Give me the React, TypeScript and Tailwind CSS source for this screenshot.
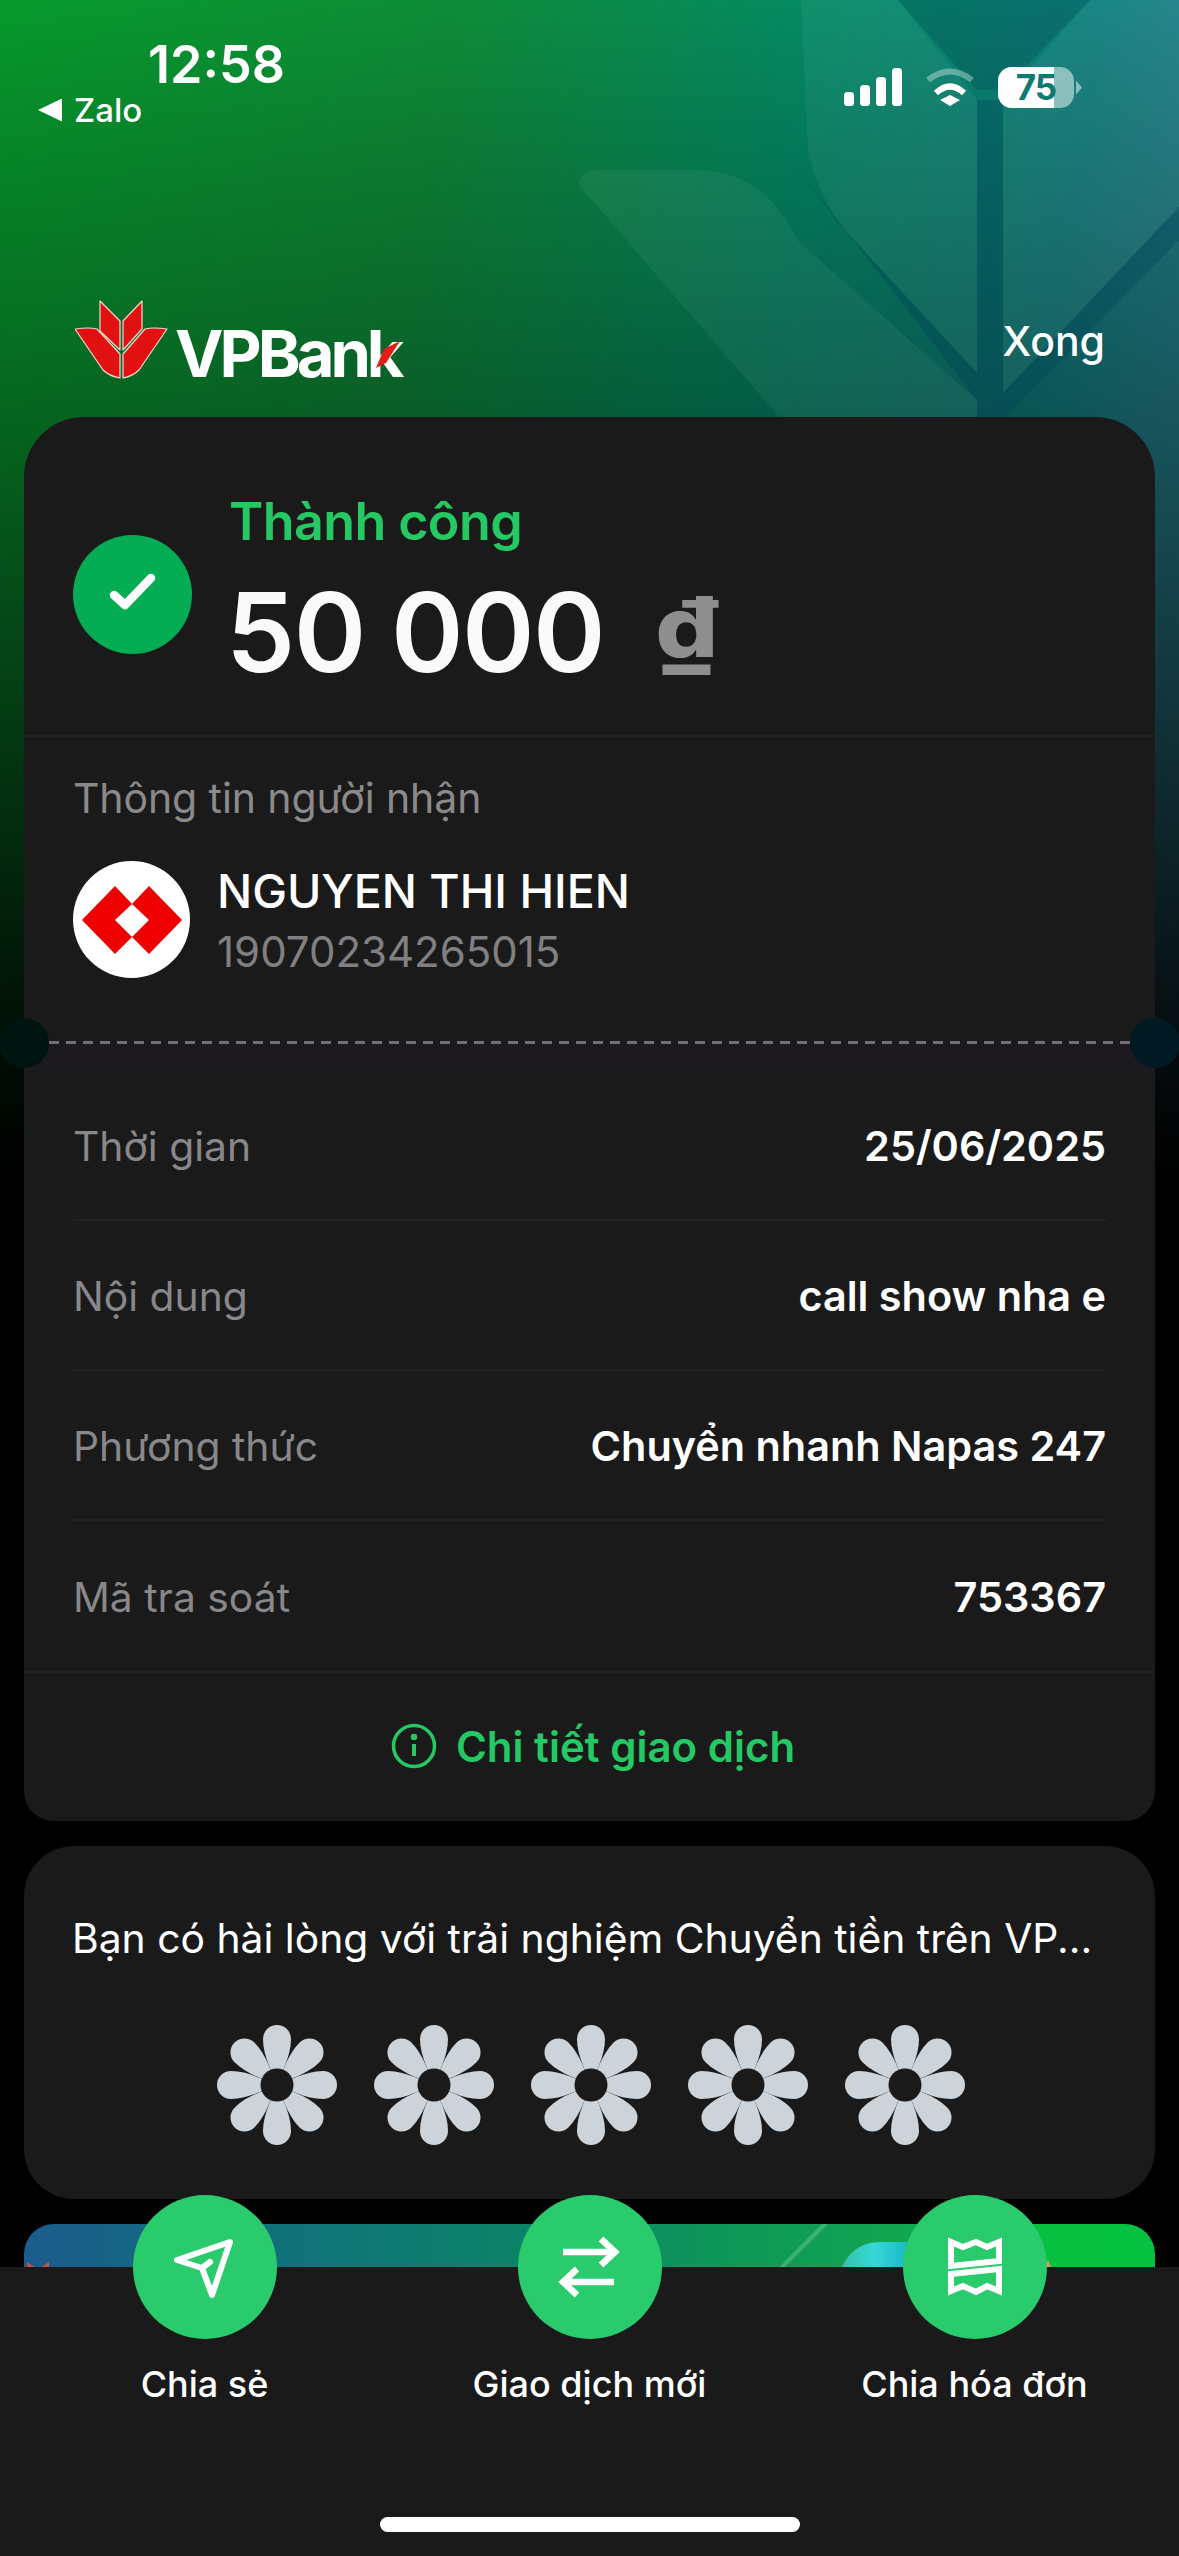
import React from "react";

const rows = [
  { label: "Thời gian", value: "25/06/2025" },
  { label: "Nội dung", value: "call show nha e" },
  { label: "Phương thức", value: "Chuyển nhanh Napas 247" },
  { label: "Mã tra soát", value: "753367" },
];

function Flower() {
  const angles = [0, 45, 90, 135, 180, 225, 270, 315];
  return (
    <svg width="120" height="120" viewBox="0 0 120 120">
      {angles.map((a) => (
        <path
          key={a}
          d="M60 60C56 48 46 32 46 14A14 14 0 0 1 74 14C74 32 64 48 60 60Z"
          fill="#ccd4da"
          transform={`rotate(${a} 60 60)`}
        />
      ))}
      <circle cx="60" cy="60" r="16.5" fill="#1a1a1a" />
    </svg>
  );
}

function SendIcon() {
  return (
    <svg width="144" height="144" viewBox="0 0 144 144" fill="none" stroke="white" strokeWidth="6" strokeLinecap="round" strokeLinejoin="round">
      <path d="M97 47L44 65L69 73L79 100Z" />
      <path d="M69 73L77 67" />
    </svg>
  );
}

function SwapIcon() {
  return (
    <svg width="144" height="144" viewBox="0 0 144 144" fill="none" stroke="white" strokeWidth="6.5">
      <path d="M45 57H97" />
      <path d="M83 44L97 57L83 70" />
      <path d="M96 87H44" />
      <path d="M59 74L45 87L59 100" />
    </svg>
  );
}

function ReceiptIcon() {
  return (
    <svg width="144" height="144" viewBox="0 0 144 144" fill="none" stroke="white" strokeWidth="6">
      <path d="M48 47L60 52L73 47L84 52L96 47V66L48 71Z" />
      <path d="M48 79L96 74V96L84 91L73 97L60 91L48 96Z" />
    </svg>
  );
}

function LogoMark() {
  return (
    <svg width="93" height="79" viewBox="0 0 93 79" fill="#e21111" stroke="#f5d5d0" strokeWidth="1.2" strokeLinejoin="round">
      <path d="M25 1L45 21V50L25 31Z" />
      <path d="M67 1L48 21V50L67 29Z" />
      <path d="M0 29Q14 27 22 29L45 54V78Q34 76 28 70Z" />
      <path d="M92 29Q78 27 70 29L48 54V78Q58 76 64 70Z" />
    </svg>
  );
}

export default function App() {
  const actions = [
    { label: "Chia sẻ", icon: <SendIcon /> },
    { label: "Giao dịch mới", icon: <SwapIcon /> },
    { label: "Chia hóa đơn", icon: <ReceiptIcon /> },
  ];

  return (
    <div className="relative w-[1179px] h-[2556px] overflow-hidden bg-black font-['Inter',sans-serif] text-white">
      {/* hero background */}
      <div className="absolute left-0 top-0 w-full h-[1180px] bg-[linear-gradient(to_bottom,rgba(0,0,0,0)_0%,rgba(0,0,0,0.1)_10%,rgba(0,0,0,0.32)_34%,rgba(0,0,0,0.6)_60%,rgba(0,0,0,0.9)_88%,#000_100%),linear-gradient(100deg,#069a2c_0%,#0e8c38_33%,#048a66_60%,#0f8080_80%,#3a8098_100%)]">
        <svg width="1179" height="430" viewBox="0 0 1179 430" fill="white">
          <path opacity="0.05" d="M579 185Q578 170 600 170H700Q765 172 797 240L977 400V430H790Z" />
          <path opacity="0.05" d="M801 0L808 150Q815 185 840 225L977 373V100L898 0Z" />
          <path opacity="0.05" d="M1090 0L1003 100V393L1179 207V0Z" />
          <path opacity="0.25" d="M898 0H1090L1003 90H977Z" fill="#003c46" />
          <path opacity="0.3" d="M977 100H1003V430H977Z M797 167L840 225L977 373V400Z M1179 207V240L1003 420V393Z" fill="#003c56" />
        </svg>
      </div>

      <div className="relative flex flex-col">
        {/* status bar */}
        <div className="flex justify-between h-[130px]">
          <div className="pl-[38px] pt-[40px]">
            <div className="ml-[110px] h-[50px] leading-[50px] text-[52px] font-semibold">12:58</div>
            <div className="flex items-center h-[40px] gap-[12px]">
              <div className="w-[24px] h-[23px] bg-white [clip-path:polygon(100%_0,100%_100%,0_50%)]" />
              <span className="text-[33px] font-medium leading-[40px]">Zalo</span>
            </div>
          </div>
          <div className="flex items-start gap-[23px] pt-[67px] pr-[97px]">
            <svg width="58" height="39" viewBox="0 0 58 39" fill="white" className="mt-[1px]">
              <rect x="0" y="24" width="10" height="14" rx="3.5" />
              <rect x="16" y="17" width="10" height="21" rx="3.5" />
              <rect x="32" y="9" width="10" height="29" rx="3.5" />
              <rect x="48" y="0" width="10" height="38" rx="3.5" />
            </svg>
            <svg width="50" height="39" viewBox="0 0 50 39" fill="none" className="mt-[1px]">
              <path d="M3 12Q25 -5 47 12" stroke="white" strokeOpacity="0.35" strokeWidth="6" />
              <path d="M11 25Q25 12 39 25" stroke="white" strokeWidth="6" />
              <path d="M15 32L25 27L35 32L25 38Z" fill="white" />
            </svg>
            <div className="flex items-center gap-[2px]">
              <div className="relative w-[76px] h-[41px] rounded-[14px] overflow-hidden bg-white/50">
                <div className="absolute left-0 top-0 bottom-0 w-[56px] bg-white" />
                <div className="absolute inset-0 flex items-center justify-center text-[35px] font-bold text-[#0f7a70] leading-none tracking-[-1px]">75</div>
              </div>
              <div className="w-[6px] h-[14px] bg-white/50 [clip-path:polygon(0_0,100%_50%,0_100%)]" />
            </div>
          </div>
        </div>

        {/* logo row */}
        <div className="flex justify-between items-start mt-[170px] h-[117px] pl-[75px] pr-[74px]">
          <div className="flex items-end gap-[7px]">
            <LogoMark />
            <div className="relative h-[50px] flex items-end">
              <span className="text-[65px] leading-[50px] font-bold tracking-[-4px]">VPBank</span>
              <svg className="absolute right-[1px] top-[12px]" width="24" height="27" viewBox="0 0 24 27" fill="#e21b1b">
                <path d="M8 8L24 0L10 22L0 27Z" />
              </svg>
            </div>
          </div>
          <span className="text-[41px] font-medium leading-[50px] mt-[16px]">Xong</span>
        </div>

        {/* main card */}
        <div className="relative mx-[24px] rounded-t-[60px] rounded-b-[30px] bg-[#1a1a1a]">
          <div className="flex h-[320px] pl-[49px] pt-[75px] border-b-2 border-[#222224]">
            <div className="flex items-center justify-center w-[119px] h-[119px] mt-[43px] rounded-full bg-[#04ac54]">
              <svg width="60" height="50" viewBox="0 0 60 50" fill="none" stroke="white" strokeWidth="8.5" strokeLinecap="round" strokeLinejoin="round" className="ml-[2px] mt-[2px]">
                <path d="M10 24L21 34L47 7" />
              </svg>
            </div>
            <div className="ml-[37px]">
              <div className="text-[52px] leading-[60px] font-semibold tracking-[-0.6px] text-[#24c964]">Thành công</div>
              <div className="flex items-center mt-[25px] h-[110px]">
                <span className="-ml-[3px] text-[110px] leading-[110px] font-semibold tracking-[-1.5px] text-[#fafafa]">50 000</span>
                <span className="inline-block ml-[56px] mb-[10px] scale-x-[1.18] text-[84px] leading-[100px] font-extrabold text-[#8e8e8e]">₫</span>
              </div>
            </div>
          </div>

          <div className="pl-[49px] pt-[36px] h-[304px]">
            <div className="text-[41px] leading-[50px] tracking-[-0.1px] text-[#8a8a8c]">Thông tin người nhận</div>
            <div className="flex mt-[38px]">
              <div className="flex items-center justify-center w-[117px] h-[117px] rounded-full bg-white">
                <svg width="100" height="68" viewBox="0 0 100 68" fill="#ee0000">
                  <path d="M0 34L33 0L50 18L33 34L50 51L33 68Z" />
                  <path d="M100 34L67 0L50 18L67 34L50 51L67 68Z" />
                </svg>
              </div>
              <div className="ml-[27px] mt-[4px]">
                <div className="text-[46.5px] leading-[52px] font-medium">NGUYEN THI HIEN</div>
                <div className="text-[42px] leading-[50px] mt-[10px] text-[#808082]">19070234265015</div>
              </div>
            </div>
          </div>

          {/* ticket notches */}
          <div className="relative h-[30px] bg-[#1c1a1f]">
            <div className="mx-[25px] h-[3px] bg-[repeating-linear-gradient(90deg,#6f6f75_0,#6f6f75_10px,transparent_10px,transparent_17px)]" />
            <div className="absolute left-[-25px] top-[-23px] w-[50px] h-[50px] rounded-full bg-[#001510]" />
            <div className="absolute right-[-25px] top-[-23px] w-[50px] h-[50px] rounded-full bg-[#001a24]" />
          </div>

          <div className="px-[49px]">
            {rows.map((row, i) => (
              <div key={row.label} className={`flex items-center justify-between pt-[3px] h-[150px] ${i < 3 ? "border-b-2 border-[#222224]" : ""}`}>
                <span className="text-[40.8px] text-[#88888a]">{row.label}</span>
                <span className="text-[41.4px] font-semibold">{row.value}</span>
              </div>
            ))}
          </div>

          <div className="flex items-center justify-center gap-[19px] h-[150px] pl-[7px] pb-[2px] border-t-2 border-[#222224]">
            <svg width="46" height="46" viewBox="0 0 46 46" fill="none" stroke="#24c964" strokeWidth="3.5">
              <circle cx="23" cy="23" r="20.5" />
              <path d="M23 21V33" strokeWidth="4" />
              <circle cx="23" cy="14" r="1.5" fill="#24c964" />
            </svg>
            <span className="text-[42px] font-semibold text-[#24c964]">Chi tiết giao dịch</span>
          </div>
        </div>

        {/* rating card */}
        <div className="mx-[24px] mt-[25px] h-[353px] rounded-[50px] bg-[#1a1a1a] pt-[65px]">
          <div className="pl-[48px] text-[40.8px] leading-[54px] whitespace-nowrap">Bạn có hài lòng với trải nghiệm Chuyển tiền trên VP...</div>
          <div className="flex justify-center gap-[37px] mt-[60px] pl-[2px]">
            {[0, 1, 2, 3, 4].map((n) => (
              <Flower key={n} />
            ))}
          </div>
        </div>

        {/* promo banner, mostly hidden by the action bar */}
        <div className="relative mx-[24px] mt-[25px] h-[100px] overflow-hidden rounded-t-[30px] bg-[linear-gradient(90deg,#1b5c8c_0%,#0f7378_25%,#0c8468_45%,#0e9a55_65%,#12a850_80%,#08c040_90%,#06c240_100%)]">
          <div className="absolute left-[3px] top-[38px] w-[22px] h-[12px] bg-[#c8503f] [clip-path:polygon(0_100%,0_0,50%_60%,100%_0,100%_100%)]" />
          <div className="absolute left-[735px] top-[14px] w-[100px] h-[4px] -rotate-45 bg-white/20" />
          <div className="absolute left-[815px] top-[18px] w-[70px] h-[40px] rounded-tl-[40px] bg-[linear-gradient(90deg,#30c0a0,#38d8d8,#18b8c8)]" />
          <div className="absolute left-[1018px] top-[36px] w-[12px] h-[14px] bg-[#e09a50] [clip-path:polygon(50%_0,100%_100%,0_100%)]" />
        </div>
      </div>

      {/* bottom action bar */}
      <div className="absolute left-0 right-0 top-[2267px] bottom-0 flex flex-col items-center justify-between bg-[#1a1a1a] pb-[24px]">
        <div className="grid grid-cols-3 w-[1155px]">
          {actions.map((action) => (
            <div key={action.label} className="flex flex-col items-center">
              <div className="w-[144px] h-[144px] -mt-[72px] rounded-full bg-[#29cb6d]">{action.icon}</div>
              <span className="mt-[20px] text-[36px] leading-[50px] font-medium">{action.label}</span>
            </div>
          ))}
        </div>
        <div className="w-[420px] h-[15px] rounded-full bg-white" />
      </div>
    </div>
  );
}
